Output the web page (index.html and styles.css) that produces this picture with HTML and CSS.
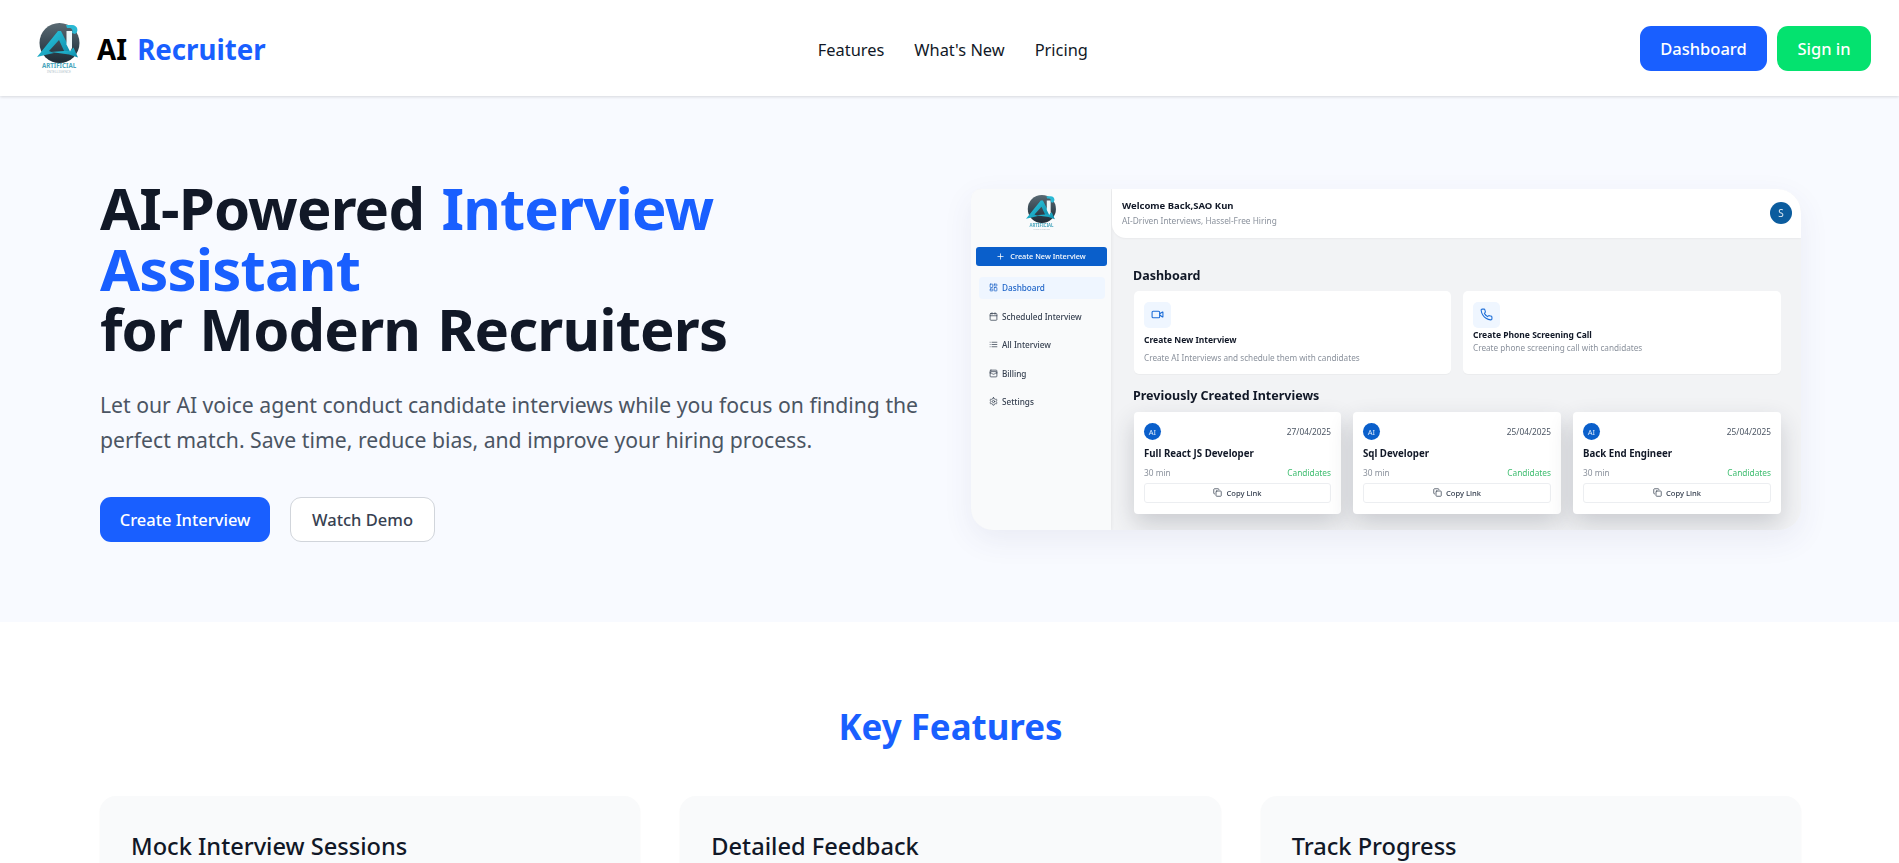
FILE: index.html
```html
<!DOCTYPE html>
<html lang="en">
<head>
<meta charset="utf-8">
<title>AI Recruiter</title>
<link rel="stylesheet" href="styles.css">
</head>
<body>
<svg class="defs" width="0" height="0" aria-hidden="true">
  <defs>
    <linearGradient id="ball" x1="0" y1="0" x2="0" y2="1"><stop offset="0" stop-color="#5a6a73"/><stop offset=".6" stop-color="#33434e"/><stop offset="1" stop-color="#1f2c36"/></linearGradient>
    <linearGradient id="teal" x1="0" y1="0" x2="1" y2="1"><stop offset="0" stop-color="#2fd0e6"/><stop offset="1" stop-color="#0b86a5"/></linearGradient>
    <symbol id="logo" viewBox="0 0 44 52">
      <circle cx="22.500" cy="21" r="20" fill="url(#ball)"/>
      <path d="M0 35 21 9h3l10 20-6 2-6-13-10 11 5 2-9 2z" fill="url(#teal)"/>
      <path d="M14 30l18 2.500 9 3-4.500-10-3.500 3.500-6 0z" fill="url(#teal)"/>
      <path d="M29.500 9h5.500v17l-2 3.500-3.500-7z" fill="#eef7f9"/>
      <path d="M29 3h6c6 0 7 7 3 9l-3-1c1-3 0-5-3-5h-2z" fill="#2ab9d4"/>
      <text x="22" y="46" class="logo-top" text-anchor="middle">ARTIFICIAL</text>
      <text x="22" y="51" class="logo-sub" text-anchor="middle">INTELLIGENCE</text>
    </symbol>
  </defs>
</svg>

<header class="topbar">
  <a class="brand" href="#">
    <svg class="brand-logo"><use href="#logo"/></svg>
    <span class="brand-name"><span class="brand-ai">AI</span> <span class="accent">Recruiter</span></span>
  </a>
  <nav class="topnav">
    <a href="#">Features</a>
    <a href="#">What's New</a>
    <a href="#">Pricing</a>
  </nav>
  <div class="actions">
    <a class="btn btn-blue btn-dash" href="#">Dashboard</a>
    <a class="btn btn-green" href="#">Sign in</a>
  </div>
</header>

<section class="hero">
  <div class="hero-copy">
    <h1>AI-Powered <span class="accent">Interview Assistant</span><br>for Modern Recruiters</h1>
    <p>Let our AI voice agent conduct candidate interviews while you focus on finding the perfect match. Save time, reduce bias, and improve your hiring process.</p>
    <div class="hero-actions">
      <a class="btn btn-blue btn-wide" href="#">Create Interview</a>
      <a class="btn btn-outline" href="#">Watch Demo</a>
    </div>
  </div>

  <div class="mock">
    <aside class="mock-side">
      <svg class="mock-logo"><use href="#logo"/></svg>
      <div class="mock-create">
        <svg class="ico ico-w" viewBox="0 0 24 24"><path d="M5 12h14M12 5v14"/></svg>
        Create New Interview
      </div>
      <ul class="mock-menu">
        <li class="active"><svg class="ico" viewBox="0 0 24 24"><rect x="3" y="3" width="7" height="9" rx="1"/><rect x="14" y="3" width="7" height="5" rx="1"/><rect x="14" y="12" width="7" height="9" rx="1"/><rect x="3" y="16" width="7" height="5" rx="1"/></svg>Dashboard</li>
        <li><svg class="ico" viewBox="0 0 24 24"><path d="M8 2v4M16 2v4"/><rect width="18" height="18" x="3" y="4" rx="2"/><path d="M3 10h18"/></svg>Scheduled Interview</li>
        <li><svg class="ico" viewBox="0 0 24 24"><path d="M3 12h.01M3 18h.01M3 6h.01M8 12h13M8 18h13M8 6h13"/></svg>All Interview</li>
        <li><svg class="ico" viewBox="0 0 24 24"><rect width="18" height="18" x="3" y="3" rx="2"/><path d="M3 9a2 2 0 0 1 2-2h14a2 2 0 0 1 2 2"/><path d="M3 11h3c.8 0 1.600.3 2.100.9l1.100.9c1.600 1.600 4.100 1.600 5.700 0l1.100-.9c.5-.5 1.300-.9 2.100-.9H21"/></svg>Billing</li>
        <li><svg class="ico" viewBox="0 0 24 24"><path d="M12.220 2h-.44a2 2 0 0 0-2 2v.18a2 2 0 0 1-1 1.730l-.43.25a2 2 0 0 1-2 0l-.15-.08a2 2 0 0 0-2.730.73l-.22.38a2 2 0 0 0 .73 2.730l.15.1a2 2 0 0 1 1 1.720v.51a2 2 0 0 1-1 1.740l-.15.09a2 2 0 0 0-.73 2.730l.22.38a2 2 0 0 0 2.730.73l.15-.08a2 2 0 0 1 2 0l.43.25a2 2 0 0 1 1 1.730V20a2 2 0 0 0 2 2h.44a2 2 0 0 0 2-2v-.18a2 2 0 0 1 1-1.730l.43-.25a2 2 0 0 1 2 0l.15.08a2 2 0 0 0 2.730-.73l.22-.39a2 2 0 0 0-.73-2.730l-.15-.08a2 2 0 0 1-1-1.740v-.5a2 2 0 0 1 1-1.740l.15-.09a2 2 0 0 0 .73-2.730l-.22-.38a2 2 0 0 0-2.730-.73l-.15.08a2 2 0 0 1-2 0l-.43-.25a2 2 0 0 1-1-1.730V4a2 2 0 0 0-2-2z"/><circle cx="12" cy="12" r="3"/></svg>Settings</li>
      </ul>
    </aside>
    <div class="mock-main">
      <div class="mock-head">
        <div>
          <div class="mock-welcome">Welcome Back,SAO Kun</div>
          <div class="mock-tag">AI-Driven Interviews, Hassel-Free Hiring</div>
        </div>
        <div class="mock-user">S</div>
      </div>
      <div class="mock-body">
        <h3 class="mock-h">Dashboard</h3>
        <div class="mock-actions">
          <div class="mock-card">
            <div class="tile"><svg class="ico ico-blue" viewBox="0 0 24 24"><path d="m16 13 5.223 3.482a.5.5 0 0 0 .777-.416V7.870a.5.5 0 0 0-.752-.432L16 10.500"/><rect x="2" y="6" width="14" height="12" rx="2"/></svg></div>
            <div class="mock-card-title gap-a">Create New Interview</div>
            <div class="mock-card-text gap-b">Create AI Interviews and schedule them with candidates</div>
          </div>
          <div class="mock-card">
            <div class="tile"><svg class="ico ico-blue" viewBox="0 0 24 24"><path d="M22 16.920v3a2 2 0 0 1-2.180 2 19.790 19.790 0 0 1-8.630-3.070 19.500 19.500 0 0 1-6-6 19.790 19.790 0 0 1-3.070-8.670A2 2 0 0 1 4.110 2h3a2 2 0 0 1 2 1.720 12.840 12.840 0 0 0 .7 2.810 2 2 0 0 1-.45 2.110L8.090 9.910a16 16 0 0 0 6 6l1.270-1.270a2 2 0 0 1 2.110-.45 12.840 12.840 0 0 0 2.810.7A2 2 0 0 1 22 16.920z"/></svg></div>
            <div class="mock-card-title gap-c">Create Phone Screening Call</div>
            <div class="mock-card-text gap-d">Create phone screening call with candidates</div>
          </div>
        </div>
        <h3 class="mock-h mock-h2">Previously Created Interviews</h3>
        <div class="mock-list">
          <div class="job">
            <div class="job-top"><span class="job-av">AI</span><span class="job-date">27/04/2025</span></div>
            <div class="job-name">Full React JS Developer</div>
            <div class="job-meta"><span class="job-min">30 min</span><span class="job-cand">Candidates</span></div>
            <div class="job-copy"><svg class="ico" viewBox="0 0 24 24"><rect width="14" height="14" x="8" y="8" rx="2"/><path d="M4 16c-1.100 0-2-.9-2-2V4c0-1.100.9-2 2-2h10c1.100 0 2 .9 2 2"/></svg>Copy Link</div>
          </div>
          <div class="job">
            <div class="job-top"><span class="job-av">AI</span><span class="job-date">25/04/2025</span></div>
            <div class="job-name">Sql Developer</div>
            <div class="job-meta"><span class="job-min">30 min</span><span class="job-cand">Candidates</span></div>
            <div class="job-copy"><svg class="ico" viewBox="0 0 24 24"><rect width="14" height="14" x="8" y="8" rx="2"/><path d="M4 16c-1.100 0-2-.9-2-2V4c0-1.100.9-2 2-2h10c1.100 0 2 .9 2 2"/></svg>Copy Link</div>
          </div>
          <div class="job">
            <div class="job-top"><span class="job-av">AI</span><span class="job-date">25/04/2025</span></div>
            <div class="job-name">Back End Engineer</div>
            <div class="job-meta"><span class="job-min">30 min</span><span class="job-cand">Candidates</span></div>
            <div class="job-copy"><svg class="ico" viewBox="0 0 24 24"><rect width="14" height="14" x="8" y="8" rx="2"/><path d="M4 16c-1.100 0-2-.9-2-2V4c0-1.100.9-2 2-2h10c1.100 0 2 .9 2 2"/></svg>Copy Link</div>
          </div>
        </div>
      </div>
    </div>
  </div>
</section>

<section class="features">
  <h2>Key Features</h2>
  <div class="feature-grid">
    <article class="feature"><h3>Mock Interview Sessions</h3></article>
    <article class="feature"><h3>Detailed Feedback</h3></article>
    <article class="feature"><h3>Track Progress</h3></article>
  </div>
</section>
</body>
</html>
```

FILE: styles.css
```css
* { box-sizing: border-box; }
html, body { margin: 0; height: 100%; overflow: hidden; }
body { font-family: "Noto Sans", "Open Sans", sans-serif; color: #111827; background: #fff; }
a { text-decoration: none; color: inherit; }
h1, h2, h3, p, ul { margin: 0; padding: 0; }
ul { list-style: none; }
.defs { position: absolute; }
.accent { color: #195fff; }

.topbar { position: relative; z-index: 2; height: 96px; display: flex; align-items: center; justify-content: space-between; padding: 0 28px 0 37px; background: #fff; box-shadow: 0 1px 3px rgba(0,0,0,.14); }
.brand { display: flex; align-items: center; gap: 16px; }
.brand-logo { width: 44px; height: 52px; }
.logo-top { font: 700 6.200px "Noto Sans", sans-serif; fill: #4aa6bd; }
.logo-sub { font: 400 3.500px "Noto Sans", sans-serif; fill: #b4c4cb; }
.brand-name { font-size: 27.700px; font-weight: 700; line-height: 36px; padding-top: 2px; }
.brand-ai { color: #000; margin-right: 3px; }
.topnav { display: flex; gap: 30px; font-size: 16.400px; color: #111827; padding-top: 2px; }
.actions { display: flex; gap: 10px; }

.btn { display: inline-flex; align-items: center; justify-content: center; height: 45px; padding: 1px 0 0; border-radius: 11px; font-size: 16.500px; font-weight: 500; white-space: nowrap; }
.btn-blue { background: #195fff; color: #fff; }
.btn-dash { width: 127px; }
.btn-green { width: 94px; background: #04e26f; color: #fff; }
.btn-wide { width: 170px; }
.btn-outline { width: 145px; background: #fff; color: #374151; border: 1px solid #d1d5db; }

.hero { display: flex; align-items: center; gap: 48px; height: 526px; padding: 0 98px 0 100px; background: #f8faff; }
.hero-copy { flex: 1; min-width: 0; padding-top: 2px; }
h1 { font-size: 58px; line-height: 60.500px; letter-spacing: -.85px; word-spacing: 3px; font-weight: 700; color: #111827; }
.hero-copy p { margin-top: 27px; font-size: 21.200px; line-height: 35px; color: #4b5563; }
.hero-actions { display: flex; gap: 20px; margin-top: 40px; }

.mock { flex: none; width: 830px; height: 341px; display: flex; background: #f2f3f5; border-radius: 10px 24px 22px 22px; box-shadow: 0 10px 30px rgba(60,70,110,.08); overflow: hidden; filter: blur(.3px); }
.mock-side { flex: none; width: 140px; padding: 5px 4px; background: #f9fafb; display: flex; flex-direction: column; align-items: center; box-shadow: 1px 0 3px rgba(0,0,0,.05); }
.mock-logo { width: 31px; height: 37px; flex: none; }
.mock-create { flex: none; margin-top: 16px; width: 131px; height: 19px; display: flex; align-items: center; justify-content: center; gap: 5px; border-radius: 3px; background: #0a5fcb; color: #fff; font-size: 7.300px; font-weight: 500; }
.mock-menu { align-self: stretch; margin-top: 11px; font-size: 8.200px; font-weight: 500; color: #374151; }
.mock-menu li { display: flex; align-items: center; gap: 4px; height: 22px; margin: 0 2px 6.500px 4px; padding-left: 10px; border-radius: 4px; }
.mock-menu .active { background: #eff6ff; color: #1d64c8; }
.ico { width: 9px; height: 9px; flex: none; fill: none; stroke: currentColor; stroke-width: 2; stroke-linecap: round; stroke-linejoin: round; }
.ico-w { color: #fff; }
.ico-blue { width: 13px; height: 13px; color: #1d6ed8; }

.mock-main { flex: 1; min-width: 0; display: flex; flex-direction: column; }
.mock-head { flex: none; height: 49px; padding: 0 9px 0 10px; display: flex; align-items: center; justify-content: space-between; background: #fff; border-radius: 0 0 0 14px; box-shadow: 0 1px 2px rgba(0,0,0,.04); margin-left: 1px; }
.mock-welcome { font-size: 9.500px; line-height: 13px; font-weight: 700; color: #111827; }
.mock-tag { font-size: 8.300px; line-height: 13px; color: #8a919c; margin-top: 2px; }
.mock-user { width: 22px; height: 22px; border-radius: 50%; background: #0b5c9e; color: #dfeaf3; font-size: 10px; display: flex; align-items: center; justify-content: center; }
.mock-body { flex: 1; padding: 29px 20px 0 23px; }
.mock-h { font-size: 12.500px; line-height: 17px; font-weight: 700; color: #111827; margin-left: -1px; }
.mock-actions { display: grid; grid-template-columns: 317px 318px; gap: 12px; margin-top: 7px; }
.mock-card { height: 83px; padding: 11px 10px; background: #fff; border-radius: 5px; box-shadow: 0 1px 1px rgba(0,0,0,.03); }
.tile { width: 27px; height: 26px; border-radius: 5px; background: #eff6ff; display: flex; align-items: center; justify-content: center; }
.mock-card-title { font-size: 8.500px; line-height: 12px; font-weight: 700; color: #111827; }
.mock-card-text { font-size: 8.200px; line-height: 12px; color: #8a919c; }
.gap-a { margin-top: 6px; }
.gap-b { margin-top: 6px; }
.gap-c { margin-top: 1px; }
.gap-d { margin-top: 1px; }
.mock-h2 { margin-top: 13px; }
.mock-list { display: grid; grid-template-columns: 207px 208px 208px; gap: 12px; margin-top: 8px; }
.job { height: 102px; padding: 12px 10px; background: #fff; border-radius: 4px; box-shadow: 0 10px 24px rgba(40,45,60,.2); }
.job-top { display: flex; align-items: center; justify-content: space-between; height: 16px; }
.job-av { width: 17px; height: 17px; border-radius: 50%; background: #0a5fcb; color: #dce9fa; font-size: 7.500px; display: flex; align-items: center; justify-content: center; }
.job-date { font-size: 8.300px; color: #4b5563; }
.job-name { margin-top: 8px; font-size: 9.700px; line-height: 12px; font-weight: 700; color: #111827; }
.job-meta { margin-top: 7px; display: flex; justify-content: space-between; font-size: 8.300px; line-height: 12px; }
.job-min { color: #8a919c; }
.job-cand { color: #3ebd6f; }
.job-copy { margin-top: 4px; height: 20px; display: flex; align-items: center; justify-content: center; gap: 4px; border: 1px solid #eceef1; border-radius: 3px; font-size: 7.600px; font-weight: 500; color: #374151; }

.features { padding: 0 98px 0 100px; background: #fff; }
.features h2 { padding-top: 80px; text-align: center; font-size: 34.900px; line-height: 50px; font-weight: 700; color: #195fff; }
.feature-grid { display: grid; grid-template-columns: repeat(3, 1fr); gap: 40px; margin-top: 44px; }
.feature { height: 200px; padding: 33px 31px; background: #f9fafb; border-radius: 16px; box-shadow: 0 1px 2px rgba(0,0,0,.05); }
.feature h3 { font-size: 23.600px; line-height: 34px; font-weight: 500; color: #111827; }
```
